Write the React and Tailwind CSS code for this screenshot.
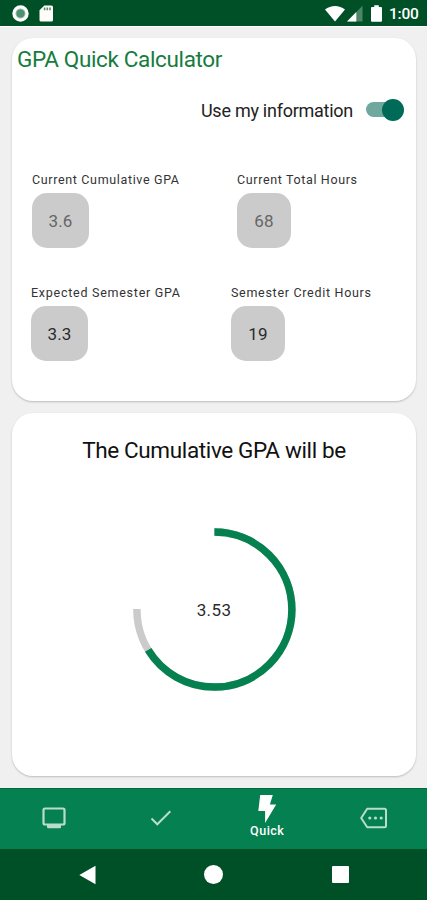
import React, { useState } from 'react';

const MAX_GPA = 4;
const SWEEP = 270;
const RADIUS = 77.5;

const Field = ({ label, value, muted, boxClass, labelClass }) => (
    <div className="flex flex-col items-start">
        <span className={`h-[15px] whitespace-nowrap text-[12.5px] leading-[15px] text-[#333333] ${labelClass}`}>{label}</span>
        <div className={`mt-[6px] flex h-[55px] items-center justify-center rounded-[15px] bg-[#cbcbcb] pt-[2px] text-[17px] tracking-[0.2px] ${boxClass} ${muted ? 'text-[#666666]' : 'text-[#2b2b2b]'}`}>
            {value}
        </div>
    </div>
);

const Gauge = ({ value }) => {
    const circumference = 2 * Math.PI * RADIUS;
    const track = (circumference * SWEEP) / 360;
    const filled = (track * value) / MAX_GPA;

    return (
        <div className="relative h-[164px] w-[164px]">
            <svg viewBox="0 0 164 164" className="h-full w-full -rotate-90" fill="none" strokeWidth="7.5">
                <circle cx="81.4" cy="82.4" r={RADIUS} stroke="#cbcbcb" strokeDasharray={`${track} ${circumference}`} />
                <circle cx="81.4" cy="82.4" r={RADIUS} stroke="#05804f" strokeDasharray={`${filled} ${circumference}`} />
            </svg>
            <span className="absolute inset-0 flex items-center justify-center pt-[4px] text-[17px] tracking-[0.4px] text-[#2b2b2b]">
                {value.toFixed(2)}
            </span>
        </div>
    );
};

const StatusBar = () => (
    <div className="flex h-[26px] shrink-0 items-center bg-[#005027] pl-[12px] pr-[8px] text-white">
        <svg className="h-[17px] w-[17px]" viewBox="0 0 17 17">
            <circle cx="8.5" cy="8.5" r="6.5" fill="#4f9070" stroke="#ffffff" strokeWidth="3.4" />
            <circle cx="8.5" cy="8.5" r="4.5" fill="none" stroke="#a9cbb9" strokeWidth="0.8" />
        </svg>
        <svg className="ml-[10px] h-[17px] w-[15px]" viewBox="0 0 15 17">
            <path d="M5.3.5h7.2q1.5 0 1.5 1.5v13q0 1.5-1.5 1.5H2q-1.5 0-1.5-1.5V5.3z" fill="#fffef8" />
            <path d="M5.6 2.5v2.7M8.3 2.5v2.7M11 2.5v2.7" stroke="#5c8870" strokeWidth="1.6" />
        </svg>
        <div className="ml-auto flex items-center">
            <svg className="h-[17px] w-[20px]" viewBox="0 0 20 17">
                <path d="M0 4.5C5.8-.3 14.2-.3 20 4.5L10 16.6z" fill="#ffffff" />
            </svg>
            <svg className="ml-[2px] h-[17px] w-[16px]" viewBox="0 0 16 17">
                <path d="M15.5.8v15.7H0z" fill="#4d8567" />
                <path d="M9.3 7.1v9.4H0z" fill="#ffffff" />
            </svg>
            <svg className="ml-[8px] h-[17px] w-[11px]" viewBox="0 0 11 17">
                <path d="M3.2.3h4.600v1.700H10q1 0 1 1v12.700q0 1-1 1H1q-1 0-1-1V3q0-1 1-1h2.200z" fill="#ffffff" />
            </svg>
            <span className="ml-[7px] w-[30px] whitespace-nowrap pt-[3px] text-[15.5px] font-medium leading-none tracking-[-0.2px]">1:00</span>
        </div>
    </div>
);

const BottomNav = () => (
    <div className="grid h-[61px] shrink-0 grid-cols-4 border-t border-[#006b3d] bg-[#058051] pb-[2px] pl-[1px] text-[#b9dccb]">
        <div className="flex items-center justify-center">
            <svg className="h-[24px] w-[26px]" viewBox="0 0 26 24" fill="none">
                <rect x="2.5" y="2.5" width="21" height="16" rx="1.5" stroke="currentColor" strokeWidth="2.2" />
                <path d="M6 18.5h14v2.6q0 1.200-1.200 1.200H7.200Q6 22.300 6 21.100z" fill="currentColor" />
            </svg>
        </div>
        <div className="flex items-center justify-center">
            <svg className="h-[24px] w-[24px]" viewBox="0 0 24 24" fill="none">
                <path d="M2.5 12.5l5.800 5.800L21.300 5.300" stroke="currentColor" strokeWidth="2" />
            </svg>
        </div>
        <div className="flex flex-col items-center pt-[6px] text-white">
            <svg className="h-[28px] w-[19px]" viewBox="0 0 19 28">
                <path d="M2.200 0h12.600l-2.900 9.600h6.300L7.100 28V16H.3z" fill="currentColor" />
            </svg>
            <span className="mt-[1px] text-[12.5px] font-medium leading-[14px] tracking-[0.5px]">Quick</span>
        </div>
        <div className="flex items-center justify-center">
            <svg className="h-[24px] w-[29px]" viewBox="0 0 29 24" fill="none">
                <path d="M8.2 2.800H25.500q1.500 0 1.500 1.500v15.400q0 1.500-1.500 1.500H8.200L2.200 12z" stroke="currentColor" strokeWidth="2" strokeLinejoin="round" />
                <circle cx="10.800" cy="12" r="1.600" fill="currentColor" />
                <circle cx="16.500" cy="12" r="1.600" fill="currentColor" />
                <circle cx="22.200" cy="12" r="1.600" fill="currentColor" />
            </svg>
        </div>
    </div>
);

const SystemBar = () => (
    <div className="flex h-[51px] shrink-0 items-center justify-between bg-[#005027] pl-[79px] pr-[78px]">
        <svg className="h-[20px] w-[17px]" viewBox="0 0 17 20" fill="#ffffff">
            <path d="M16.5.8v18.400L.3 10z" />
        </svg>
        <div className="mr-[1px] h-[19px] w-[19px] rounded-full bg-white" />
        <div className="h-[17px] w-[17px] rounded-[1px] bg-white" />
    </div>
);

const App = () => {
    const [useInfo, setUseInfo] = useState(true);

    return (
        <div className="flex h-[900px] w-[427px] flex-col overflow-hidden bg-[#f0f0f0] font-['Roboto',sans-serif]">
            <StatusBar />

            <main className="flex flex-1 flex-col gap-[12px] border-t border-white px-[12px] pt-[11px]">
                <section className="h-[363px] w-[404px] rounded-[21px] bg-white shadow-[0_1px_2px_rgba(0,0,0,0.22)]">
                    <h1 className="pl-[5px] pt-[7px] text-[22.5px] leading-[28px] tracking-[-0.36px] text-[#167c3e]">GPA Quick Calculator</h1>

                    <div className="mt-[25px] flex h-[24px] items-center justify-end pr-[12px]">
                        <span className="whitespace-nowrap text-[18px] tracking-[-0.26px] text-[#222222]">Use my information</span>
                        <button
                            onClick={() => setUseInfo(!useInfo)}
                            className="relative ml-[13px] h-[22px] w-[38px]"
                        >
                            <span className="absolute left-0 top-[3px] h-[15px] w-[34px] rounded-full bg-[#6fa99d]" />
                            <span className={`absolute top-0 h-[22px] w-[22px] rounded-full ${useInfo ? 'right-0 bg-[#006a58]' : 'left-0 bg-gray-100'}`} />
                        </button>
                    </div>

                    <div className="mt-[50px] flex pl-[20px]">
                        <div className="w-[205px]">
                            <Field label="Current Cumulative GPA" value="3.6" muted boxClass="w-[57px]" labelClass="tracking-[0.65px]" />
                        </div>
                        <Field label="Current Total Hours" value="68" muted boxClass="w-[54px]" labelClass="tracking-[0.64px]" />
                    </div>

                    <div className="mt-[37px] flex pl-[19px]">
                        <div className="w-[200px]">
                            <Field label="Expected Semester GPA" value="3.3" boxClass="w-[57px]" labelClass="tracking-[0.74px]" />
                        </div>
                        <Field label="Semester Credit Hours" value="19" boxClass="w-[54px]" labelClass="tracking-[0.7px]" />
                    </div>
                </section>

                <section className="flex h-[363px] w-[404px] flex-col items-center rounded-[21px] bg-white shadow-[0_1px_2px_rgba(0,0,0,0.22)]">
                    <h2 className="pt-[23px] text-[22.5px] leading-[28px] tracking-[-0.36px] text-[#111111]">The Cumulative GPA will be</h2>
                    <div className="mt-[63px]">
                        <Gauge value={3.53} />
                    </div>
                </section>
            </main>

            <BottomNav />
            <SystemBar />
        </div>
    );
};

export default App;
